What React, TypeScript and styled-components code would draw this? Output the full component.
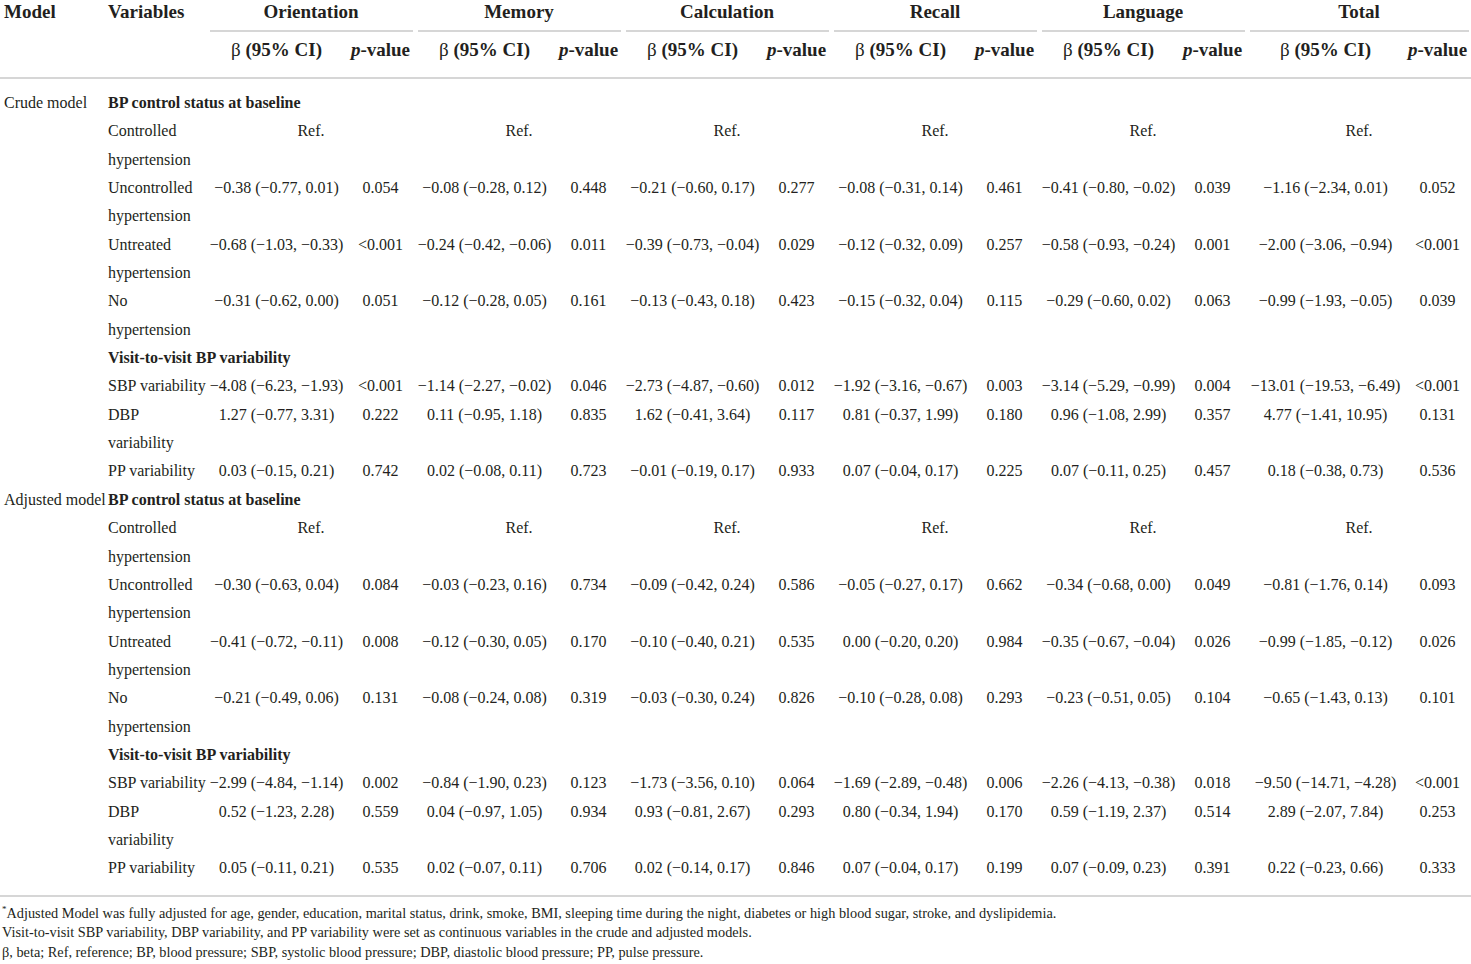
import React from "react";
import styled, { createGlobalStyle } from "styled-components";

type Pair = [string, string];

interface VarRow {
  label: string[];
  values: Pair[] | null;
}

interface Section {
  title: string;
  rows: VarRow[];
}

interface ModelBlock {
  name: string;
  sections: Section[];
}

const groups = ["Orientation", "Memory", "Calculation", "Recall", "Language", "Total"];

const crude: ModelBlock = {
  name: "Crude model",
  sections: [
    {
      title: "BP control status at baseline",
      rows: [
        { label: ["Controlled", "hypertension"], values: null },
        {
          label: ["Uncontrolled", "hypertension"],
          values: [
            ["−0.38 (−0.77, 0.01)", "0.054"],
            ["−0.08 (−0.28, 0.12)", "0.448"],
            ["−0.21 (−0.60, 0.17)", "0.277"],
            ["−0.08 (−0.31, 0.14)", "0.461"],
            ["−0.41 (−0.80, −0.02)", "0.039"],
            ["−1.16 (−2.34, 0.01)", "0.052"],
          ],
        },
        {
          label: ["Untreated", "hypertension"],
          values: [
            ["−0.68 (−1.03, −0.33)", "<0.001"],
            ["−0.24 (−0.42, −0.06)", "0.011"],
            ["−0.39 (−0.73, −0.04)", "0.029"],
            ["−0.12 (−0.32, 0.09)", "0.257"],
            ["−0.58 (−0.93, −0.24)", "0.001"],
            ["−2.00 (−3.06, −0.94)", "<0.001"],
          ],
        },
        {
          label: ["No", "hypertension"],
          values: [
            ["−0.31 (−0.62, 0.00)", "0.051"],
            ["−0.12 (−0.28, 0.05)", "0.161"],
            ["−0.13 (−0.43, 0.18)", "0.423"],
            ["−0.15 (−0.32, 0.04)", "0.115"],
            ["−0.29 (−0.60, 0.02)", "0.063"],
            ["−0.99 (−1.93, −0.05)", "0.039"],
          ],
        },
      ],
    },
    {
      title: "Visit-to-visit BP variability",
      rows: [
        {
          label: ["SBP variability"],
          values: [
            ["−4.08 (−6.23, −1.93)", "<0.001"],
            ["−1.14 (−2.27, −0.02)", "0.046"],
            ["−2.73 (−4.87, −0.60)", "0.012"],
            ["−1.92 (−3.16, −0.67)", "0.003"],
            ["−3.14 (−5.29, −0.99)", "0.004"],
            ["−13.01 (−19.53, −6.49)", "<0.001"],
          ],
        },
        {
          label: ["DBP", "variability"],
          values: [
            ["1.27 (−0.77, 3.31)", "0.222"],
            ["0.11 (−0.95, 1.18)", "0.835"],
            ["1.62 (−0.41, 3.64)", "0.117"],
            ["0.81 (−0.37, 1.99)", "0.180"],
            ["0.96 (−1.08, 2.99)", "0.357"],
            ["4.77 (−1.41, 10.95)", "0.131"],
          ],
        },
        {
          label: ["PP variability"],
          values: [
            ["0.03 (−0.15, 0.21)", "0.742"],
            ["0.02 (−0.08, 0.11)", "0.723"],
            ["−0.01 (−0.19, 0.17)", "0.933"],
            ["0.07 (−0.04, 0.17)", "0.225"],
            ["0.07 (−0.11, 0.25)", "0.457"],
            ["0.18 (−0.38, 0.73)", "0.536"],
          ],
        },
      ],
    },
  ],
};

const adjusted: ModelBlock = {
  name: "Adjusted model",
  sections: [
    {
      title: "BP control status at baseline",
      rows: [
        { label: ["Controlled", "hypertension"], values: null },
        {
          label: ["Uncontrolled", "hypertension"],
          values: [
            ["−0.30 (−0.63, 0.04)", "0.084"],
            ["−0.03 (−0.23, 0.16)", "0.734"],
            ["−0.09 (−0.42, 0.24)", "0.586"],
            ["−0.05 (−0.27, 0.17)", "0.662"],
            ["−0.34 (−0.68, 0.00)", "0.049"],
            ["−0.81 (−1.76, 0.14)", "0.093"],
          ],
        },
        {
          label: ["Untreated", "hypertension"],
          values: [
            ["−0.41 (−0.72, −0.11)", "0.008"],
            ["−0.12 (−0.30, 0.05)", "0.170"],
            ["−0.10 (−0.40, 0.21)", "0.535"],
            ["0.00 (−0.20, 0.20)", "0.984"],
            ["−0.35 (−0.67, −0.04)", "0.026"],
            ["−0.99 (−1.85, −0.12)", "0.026"],
          ],
        },
        {
          label: ["No", "hypertension"],
          values: [
            ["−0.21 (−0.49, 0.06)", "0.131"],
            ["−0.08 (−0.24, 0.08)", "0.319"],
            ["−0.03 (−0.30, 0.24)", "0.826"],
            ["−0.10 (−0.28, 0.08)", "0.293"],
            ["−0.23 (−0.51, 0.05)", "0.104"],
            ["−0.65 (−1.43, 0.13)", "0.101"],
          ],
        },
      ],
    },
    {
      title: "Visit-to-visit BP variability",
      rows: [
        {
          label: ["SBP variability"],
          values: [
            ["−2.99 (−4.84, −1.14)", "0.002"],
            ["−0.84 (−1.90, 0.23)", "0.123"],
            ["−1.73 (−3.56, 0.10)", "0.064"],
            ["−1.69 (−2.89, −0.48)", "0.006"],
            ["−2.26 (−4.13, −0.38)", "0.018"],
            ["−9.50 (−14.71, −4.28)", "<0.001"],
          ],
        },
        {
          label: ["DBP", "variability"],
          values: [
            ["0.52 (−1.23, 2.28)", "0.559"],
            ["0.04 (−0.97, 1.05)", "0.934"],
            ["0.93 (−0.81, 2.67)", "0.293"],
            ["0.80 (−0.34, 1.94)", "0.170"],
            ["0.59 (−1.19, 2.37)", "0.514"],
            ["2.89 (−2.07, 7.84)", "0.253"],
          ],
        },
        {
          label: ["PP variability"],
          values: [
            ["0.05 (−0.11, 0.21)", "0.535"],
            ["0.02 (−0.07, 0.11)", "0.706"],
            ["0.02 (−0.14, 0.17)", "0.846"],
            ["0.07 (−0.04, 0.17)", "0.199"],
            ["0.07 (−0.09, 0.23)", "0.391"],
            ["0.22 (−0.23, 0.66)", "0.333"],
          ],
        },
      ],
    },
  ],
};

const models = [crude, adjusted];

const GlobalStyle = createGlobalStyle`
  body {
    margin: 0;
    background: #ffffff;
    color: #231f20;
    font-family: "Liberation Serif", "Times New Roman", serif;
  }
`;

const Page = styled.div`
  width: 1471px;
`;

const Table = styled.table`
  width: 100%;
  table-layout: fixed;
  border-collapse: collapse;
  font-size: 16px;
`;

const HeadCell = styled.th<{ $pad?: number }>`
  padding: 0 0 0 ${(p) => p.$pad ?? 0}px;
  text-align: left;
  vertical-align: top;
  font-size: 19px;
  font-weight: bold;
  line-height: 24px;
  white-space: nowrap;
  border-bottom: 2px solid #d6d6d6;
`;

const GroupCell = styled.th`
  padding: 0;
  font-weight: bold;
`;

const GroupTitle = styled.div`
  margin: 0 2.5px;
  padding-bottom: 6px;
  font-size: 19px;
  line-height: 24px;
  text-align: center;
  border-bottom: 2px solid #d6d6d6;
`;

const SubHead = styled.th`
  padding: 6px 0 15px;
  font-size: 19px;
  font-weight: bold;
  line-height: 24px;
  text-align: center;
  white-space: nowrap;
  border-bottom: 2px solid #d6d6d6;
`;

const Beta = styled.span`
  font-weight: normal;
`;

const PItalic = styled.i`
  font-weight: bold;
`;

const BodyRow = styled.tr`
  & > td {
    line-height: 28.35px;
    vertical-align: top;
    white-space: nowrap;
  }

  tbody > &:first-child > td {
    padding-top: 10px;
  }

  tbody > &:last-child > td {
    padding-bottom: 12px;
    border-bottom: 2px solid #d6d6d6;
  }
`;

const ModelCell = styled.td`
  padding: 0 0 0 4px;
`;

const VarCell = styled.td<{ $bold?: boolean }>`
  padding: 0 0 0 3px;
  font-weight: ${(p) => (p.$bold ? "bold" : "normal")};
`;

const ValueCell = styled.td`
  padding: 0;
  text-align: center;
`;

const Notes = styled.div`
  margin-top: 7px;
  padding-left: 2px;
  font-size: 14.3px;
  line-height: 19.5px;
`;

const Note = styled.p`
  margin: 0;
`;

const Star = styled.sup`
  font-size: 9px;
  line-height: 0;
`;

const widths = [105, 102, 139, 69, 139, 69, 139, 69, 139, 69, 139, 69, 157, 67];

function renderRows(block: ModelBlock) {
  const out: React.ReactNode[] = [];
  block.sections.forEach((section, si) => {
    out.push(
      <BodyRow key={`${block.name}-${si}`}>
        <ModelCell>{si === 0 ? block.name : ""}</ModelCell>
        <VarCell $bold colSpan={13}>
          {section.title}
        </VarCell>
      </BodyRow>
    );
    section.rows.forEach((row, ri) => {
      out.push(
        <BodyRow key={`${block.name}-${si}-${ri}`}>
          <ModelCell />
          <VarCell>
            {row.label.map((line, li) => (
              <React.Fragment key={li}>
                {li > 0 && <br />}
                {line}
              </React.Fragment>
            ))}
          </VarCell>
          {row.values
            ? row.values.flatMap(([beta, p], gi) => [
                <ValueCell key={`b${gi}`}>{beta}</ValueCell>,
                <ValueCell key={`p${gi}`}>{p}</ValueCell>,
              ])
            : groups.map((g) => (
                <ValueCell key={g} colSpan={2}>
                  Ref.
                </ValueCell>
              ))}
        </BodyRow>
      );
    });
  });
  return out;
}

const App: React.FC = () => {
  return (
    <Page>
      <GlobalStyle />
      <Table>
        <colgroup>
          {widths.map((w, i) => (
            <col key={i} style={{ width: w }} />
          ))}
        </colgroup>
        <thead>
          <tr>
            <HeadCell rowSpan={2} $pad={4}>
              Model
            </HeadCell>
            <HeadCell rowSpan={2} $pad={3}>
              Variables
            </HeadCell>
            {groups.map((g) => (
              <GroupCell key={g} colSpan={2}>
                <GroupTitle>{g}</GroupTitle>
              </GroupCell>
            ))}
          </tr>
          <tr>
            {groups.flatMap((g) => [
              <SubHead key={`${g}-b`}>
                <Beta>β</Beta> (95% CI)
              </SubHead>,
              <SubHead key={`${g}-p`}>
                <PItalic>p</PItalic>-value
              </SubHead>,
            ])}
          </tr>
        </thead>
        <tbody>{models.flatMap((m) => renderRows(m))}</tbody>
      </Table>
      <Notes>
        <Note>
          <Star>*</Star>Adjusted Model was fully adjusted for age, gender, education, marital status, drink,
          smoke, BMI, sleeping time during the night, diabetes or high blood sugar, stroke, and dyslipidemia.
        </Note>
        <Note>
          Visit-to-visit SBP variability, DBP variability, and PP variability were set as continuous variables
          in the crude and adjusted models.
        </Note>
        <Note>
          β, beta; Ref, reference; BP, blood pressure; SBP, systolic blood pressure; DBP, diastolic blood
          pressure; PP, pulse pressure.
        </Note>
      </Notes>
    </Page>
  );
};

export default App;
